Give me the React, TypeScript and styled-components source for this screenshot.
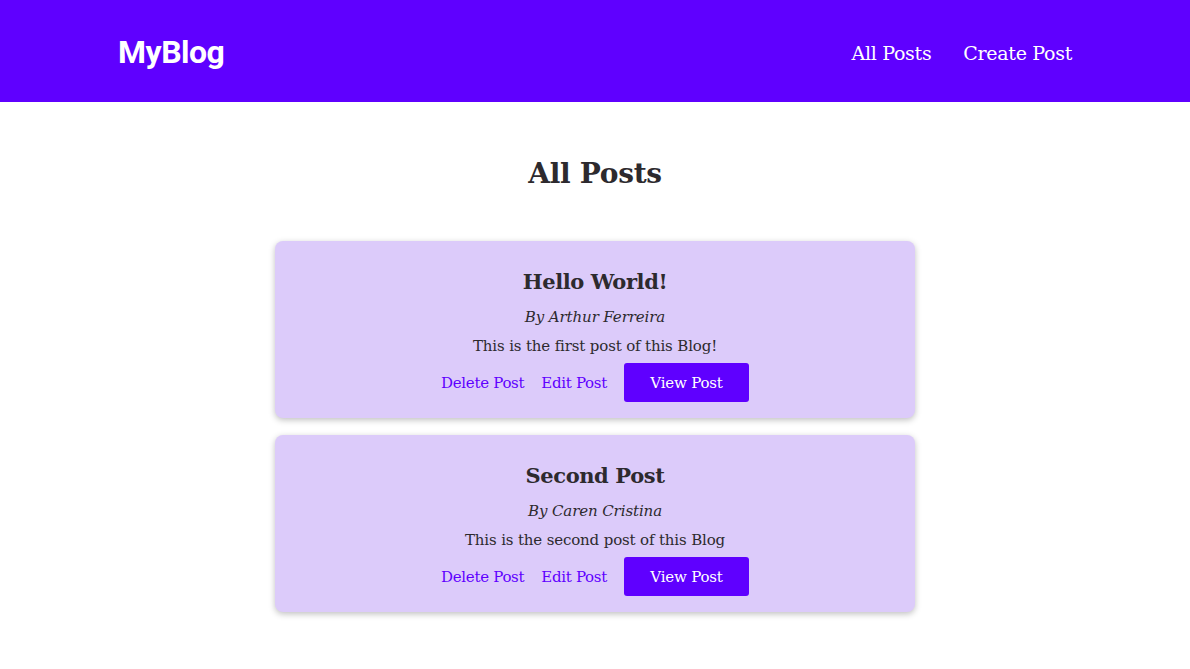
import { createGlobalStyle, styled } from "styled-components";

const PURPLE = "#5f00ff";
const LAVENDER = "#dccbfa";
const TEXT = "#2d2a2e";
const SLAB = `"Roboto Slab", "DejaVu Serif", serif`;

const GlobalStyle = createGlobalStyle`
  * {
    box-sizing: border-box;
  }
  body {
    margin: 0;
    background: #fff;
    font-family: ${SLAB};
    color: ${TEXT};
  }
`;

type Post = {
  id: number;
  title: string;
  author: string;
  body: string;
};

const posts: Post[] = [
  {
    id: 1,
    title: "Hello World!",
    author: "Arthur Ferreira",
    body: "This is the first post of this Blog!",
  },
  {
    id: 2,
    title: "Second Post",
    author: "Caren Cristina",
    body: "This is the second post of this Blog",
  },
];

const Navbar = styled.header`
  display: flex;
  align-items: center;
  justify-content: space-between;
  height: 102px;
  padding: 2px 118px 0;
  background: ${PURPLE};
`;

const Logo = styled.h2`
  margin: 0;
  font-family: Roboto, "Liberation Sans", sans-serif;
  font-weight: 700;
  font-size: 32px;
  color: #fff;
  letter-spacing: -0.5px;
`;

const NavLinks = styled.nav`
  display: flex;
  gap: 32px;
  margin-top: 1px;
`;

const NavLink = styled.a`
  font-size: 19px;
  letter-spacing: -0.3px;
  color: #fff;
  text-decoration: none;
`;

const Main = styled.main`
  display: flex;
  flex-direction: column;
  align-items: center;
  padding: 52px 0 40px;
`;

const Title = styled.h1`
  margin: 0 0 47px;
  font-size: 28px;
  letter-spacing: -0.3px;
  font-weight: 700;
  line-height: 40px;
`;

const List = styled.div`
  display: flex;
  flex-direction: column;
  gap: 17px;
  width: 640px;
`;

const Card = styled.article`
  display: flex;
  flex-direction: column;
  align-items: center;
  padding: 25px 16px 16px;
  border-radius: 8px;
  background: ${LAVENDER};
  box-shadow: 0 2px 6px rgba(0, 0, 0, 0.25);
`;

const PostTitle = styled.h2`
  margin: 0;
  font-size: 21px;
  letter-spacing: -0.4px;
  font-weight: 700;
  line-height: 32px;
`;

const Author = styled.p`
  margin: 8px 0 0;
  font-size: 15px;
  letter-spacing: -0.1px;
  font-style: italic;
  line-height: 22px;
`;

const Body = styled.p`
  margin: 7px 0 0;
  font-size: 15px;
  letter-spacing: -0.15px;
  line-height: 22px;
`;

const Actions = styled.div`
  display: flex;
  align-items: center;
  gap: 17px;
  margin-top: 6px;
`;

const TextLink = styled.a`
  font-size: 15px;
  letter-spacing: -0.3px;
  color: ${PURPLE};
  text-decoration: none;
`;

const ViewButton = styled.button`
  width: 125px;
  height: 39px;
  border: none;
  border-radius: 3px;
  background: ${PURPLE};
  color: #fff;
  font-family: ${SLAB};
  font-size: 15px;
  letter-spacing: -0.2px;
  font-weight: 500;
  cursor: pointer;
`;

export default function App() {
  return (
    <>
      <GlobalStyle />
      <Navbar>
        <Logo>MyBlog</Logo>
        <NavLinks>
          <NavLink href="#">All Posts</NavLink>
          <NavLink href="#">Create Post</NavLink>
        </NavLinks>
      </Navbar>
      <Main>
        <Title>All Posts</Title>
        <List>
          {posts.map((post) => (
            <Card key={post.id}>
              <PostTitle>{post.title}</PostTitle>
              <Author>By {post.author}</Author>
              <Body>{post.body}</Body>
              <Actions>
                <TextLink href="#">Delete Post</TextLink>
                <TextLink href="#">Edit Post</TextLink>
                <ViewButton>View Post</ViewButton>
              </Actions>
            </Card>
          ))}
        </List>
      </Main>
    </>
  );
}
